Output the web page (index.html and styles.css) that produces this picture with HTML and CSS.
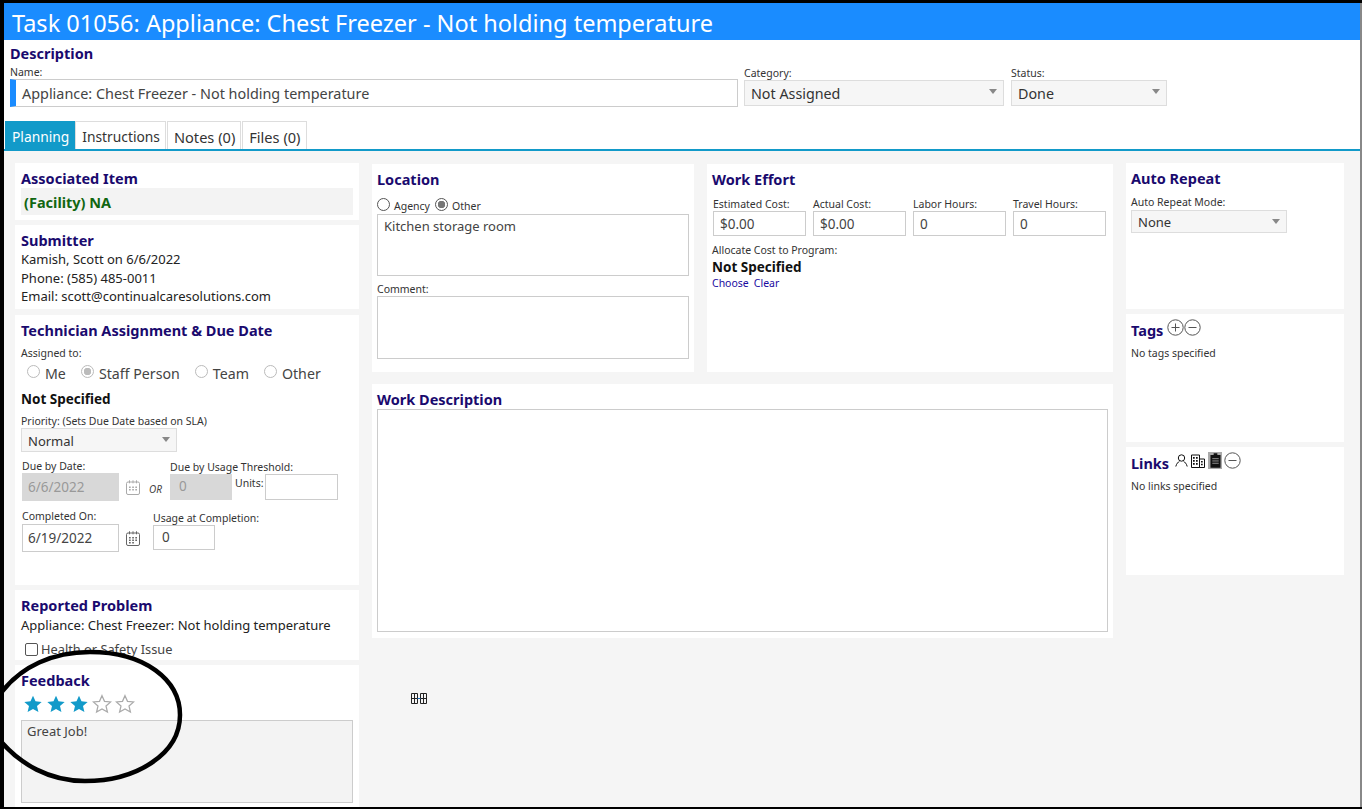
FILE: index.html
```html
<!DOCTYPE html>
<html lang="en">
<head>
    <meta charset="UTF-8">
    <title>Task 01056</title>
    <link rel="stylesheet" href="styles.css">
</head>
<body>
    <div class="frame">
        <h1 class="title">Task 01056: Appliance: Chest Freezer - Not holding temperature</h1>

        <div class="description">
            <h2>Description</h2>
            <div class="desc-row">
                <div class="field name-field">
                    <label>Name:</label>
                    <div class="input required">Appliance: Chest Freezer - Not holding temperature</div>
                </div>
                <div class="field category-field">
                    <label>Category:</label>
                    <div class="select">Not Assigned</div>
                </div>
                <div class="field status-field">
                    <label>Status:</label>
                    <div class="select">Done</div>
                </div>
            </div>
        </div>

        <div class="tabs">
            <span class="tab active">Planning</span>
            <span class="tab">Instructions</span>
            <span class="tab tab-count">Notes (0)</span>
            <span class="tab tab-count">Files (0)</span>
        </div>

        <div class="content">
            <div class="col col-left">
                <section class="card associated">
                    <h2>Associated Item</h2>
                    <div class="facility">(Facility) NA</div>
                </section>
                <section class="card submitter">
                    <h2>Submitter</h2>
                    <p>Kamish, Scott on 6/6/2022</p>
                    <p>Phone: (585) 485-0011</p>
                    <p>Email: scott@continualcaresolutions.com</p>
                </section>
                <section class="card technician">
                    <h2>Technician Assignment &amp; Due Date</h2>
                    <label>Assigned to:</label>
                    <div class="assign-row">
                        <span class="opt"><i class="radio faded"></i>Me</span>
                        <span class="opt"><i class="radio faded on"></i>Staff Person</span>
                        <span class="opt"><i class="radio faded"></i>Team</span>
                        <span class="opt"><i class="radio faded"></i>Other</span>
                    </div>
                    <div class="strong">Not Specified</div>
                    <label class="priority-label">Priority: (Sets Due Date based on SLA)</label>
                    <div class="select priority">Normal</div>
                    <div class="due-row">
                        <div class="field">
                            <label>Due by Date:</label>
                            <div class="input disabled date-input">6/6/2022</div>
                        </div>
                        <svg class="cal faded-cal" viewBox="0 0 16 16"><path d="M3 2.500h10a1.500 1.500 0 0 1 1.500 1.500v9.500a1.500 1.500 0 0 1-1.500 1.500H3a1.500 1.500 0 0 1-1.500-1.500V4A1.500 1.500 0 0 1 3 2.500zM4.500.8v3M8 .8v3M11.500.8v3" fill="none" stroke="currentColor"/><path d="M4 7h1.700v1.500H4zM7.200 7h1.700v1.500H7.200zM10.300 7H12v1.500h-1.700zM4 9.500h1.700V11H4zM7.200 9.500h1.700V11H7.200zM10.300 9.500H12V11h-1.700z" fill="currentColor"/></svg>
                        <em class="or">OR</em>
                        <div class="field threshold">
                            <label>Due by Usage Threshold:</label>
                            <div class="threshold-row">
                                <div class="input disabled threshold-input">0</div>
                                <span class="units">Units:</span>
                                <div class="input units-input"></div>
                            </div>
                        </div>
                    </div>
                    <div class="done-row">
                        <div class="field">
                            <label>Completed On:</label>
                            <div class="input date-input">6/19/2022</div>
                        </div>
                        <svg class="cal" viewBox="0 0 16 16"><path d="M3 2.500h10a1.500 1.500 0 0 1 1.500 1.500v9.500a1.500 1.500 0 0 1-1.500 1.500H3a1.500 1.500 0 0 1-1.500-1.500V4A1.500 1.500 0 0 1 3 2.500zM4.500.8v3M8 .8v3M11.500.8v3" fill="none" stroke="currentColor"/><path d="M4 6.500h1.700V8H4zM7.200 6.500h1.700V8H7.200zM10.300 6.500H12V8h-1.700zM4 9h1.700v1.500H4zM7.200 9h1.700v1.500H7.200zM10.300 9H12v1.500h-1.700zM4 11.500h1.700V13H4zM7.200 11.500h1.700V13H7.200z" fill="currentColor"/></svg>
                        <div class="field usage">
                            <label>Usage at Completion:</label>
                            <div class="input usage-input">0</div>
                        </div>
                    </div>
                </section>
                <section class="card reported">
                    <h2>Reported Problem</h2>
                    <p>Appliance: Chest Freezer: Not holding temperature</p>
                    <div class="check-row"><i class="checkbox"></i>Health or Safety Issue</div>
                </section>
                <section class="card feedback">
                    <h2>Feedback</h2>
                    <div class="stars">
                        <svg viewBox="0 0 24 24"><path class="star-on" d="M12 2l3 6.800 7.400.7-5.600 4.900 1.700 7.300L12 17.900l-6.500 3.800 1.700-7.300-5.600-4.900 7.400-.7z"/></svg>
                        <svg viewBox="0 0 24 24"><path class="star-on" d="M12 2l3 6.800 7.400.7-5.600 4.900 1.700 7.300L12 17.900l-6.500 3.800 1.700-7.300-5.600-4.900 7.400-.7z"/></svg>
                        <svg viewBox="0 0 24 24"><path class="star-on" d="M12 2l3 6.800 7.400.7-5.600 4.900 1.700 7.300L12 17.900l-6.500 3.800 1.700-7.300-5.600-4.900 7.400-.7z"/></svg>
                        <svg viewBox="0 0 24 24"><path class="star-off" d="M12 2l3 6.800 7.400.7-5.600 4.900 1.700 7.300L12 17.900l-6.500 3.800 1.700-7.300-5.600-4.900 7.400-.7z"/></svg>
                        <svg viewBox="0 0 24 24"><path class="star-off" d="M12 2l3 6.800 7.400.7-5.600 4.900 1.700 7.300L12 17.900l-6.500 3.800 1.700-7.300-5.600-4.900 7.400-.7z"/></svg>
                    </div>
                    <div class="feedback-text">Great Job!</div>
                </section>
            </div>

            <div class="col col-mid">
                <div class="mid-top">
                    <section class="card location">
                        <h2>Location</h2>
                        <div class="loc-radios">
                            <i class="radio"></i><span>Agency</span>
                            <i class="radio on"></i><span>Other</span>
                        </div>
                        <div class="input area loc-area">Kitchen storage room</div>
                        <label>Comment:</label>
                        <div class="input area comment-area"></div>
                    </section>
                    <section class="card effort">
                        <h2>Work Effort</h2>
                        <div class="effort-row">
                            <div class="field"><label>Estimated Cost:</label><div class="input">$0.00</div></div>
                            <div class="field"><label>Actual Cost:</label><div class="input">$0.00</div></div>
                            <div class="field"><label>Labor Hours:</label><div class="input">0</div></div>
                            <div class="field"><label>Travel Hours:</label><div class="input">0</div></div>
                        </div>
                        <label class="allocate">Allocate Cost to Program:</label>
                        <div class="strong">Not Specified</div>
                        <div class="links"><a>Choose</a><a>Clear</a></div>
                    </section>
                </div>
                <section class="card work-desc">
                    <h2>Work Description</h2>
                    <div class="input area work-area"></div>
                </section>
                <svg class="grid-icon" viewBox="0 0 16 11"><path d="M.5.5h6v10h-6zM9.500.5h6v10h-6zM.5 5.500h6M3.500.5v10M9.500 5.500h6M12.500.5v10" fill="none" stroke="#222"/><path d="M6.500 5.500h3" stroke="#1a6fc0"/></svg>
            </div>

            <div class="col col-right">
                <section class="card auto-repeat">
                    <h2>Auto Repeat</h2>
                    <label>Auto Repeat Mode:</label>
                    <div class="select repeat">None</div>
                </section>
                <section class="card tags">
                    <div class="head-icons">
                        <h2>Tags</h2>
                        <svg class="ring" viewBox="0 0 17 17"><circle cx="8.500" cy="8.500" r="7.700"/><path d="M4.500 8.500h8M8.500 4.500v8"/></svg>
                        <svg class="ring" viewBox="0 0 17 17"><circle cx="8.500" cy="8.500" r="7.700"/><path d="M4.500 8.500h8"/></svg>
                    </div>
                    <p class="small">No tags specified</p>
                </section>
                <section class="card card-links">
                    <div class="head-icons">
                        <h2>Links</h2>
                        <svg class="person" viewBox="0 0 13 13"><circle cx="6.500" cy="4" r="3.200"/><path d="M.8 12.500c.6-2.800 2.500-4.500 3.700-5.300M12.200 12.500c-.6-2.800-2.500-4.500-3.700-5.300"/></svg>
                        <svg class="building" viewBox="0 0 14 14"><path d="M.5 1h8v12.500h-8zM8.500 5h5v8.500h-5z" fill="none" stroke="#111"/><path d="M2 3h1.700v1.700H2zM5 3h1.700v1.700H5zM2 6h1.700v1.700H2zM5 6h1.700v1.700H5zM2 9h1.700v1.700H2zM5 9h1.700v1.700H5zM10 7h1.700v1.500H10zM10 9.800h1.700v1.500H10z" fill="#111"/></svg>
                        <span class="clip-btn"><svg viewBox="0 0 12 16"><path d="M4 0h4v2h3.500v14H.5V2H4z" fill="#111"/><path d="M2.500 6h7M2.500 8.500h7M2.500 11h7" stroke="#999"/></svg></span>
                        <svg class="ring" viewBox="0 0 17 17"><circle cx="8.500" cy="8.500" r="7.700"/><path d="M4.500 8.500h8"/></svg>
                    </div>
                    <p class="small">No links specified</p>
                </section>
            </div>
        </div>

        <svg class="circle-mark" viewBox="0 645 190 140"><path d="M-2 697C20 665 55 652 90 652C145 652 180 680 180 715C180 755 135 781 85 781C50 781 20 765-2 738"/></svg>
    </div>
</body>
</html>
```

FILE: styles.css
```css
* {
    box-sizing: border-box;
}

html, body {
    margin: 0;
    padding: 0;
    height: 809px;
    overflow: hidden;
}

body {
    background: #000;
    font-family: "Noto Sans", "Open Sans", sans-serif;
    font-size: 14px;
    color: #222;
}

.frame {
    position: relative;
    margin: 3px 0 2px 4px;
    height: 804px;
    background: #fff;
    border-right: 2px solid #888;
    display: flex;
    flex-direction: column;
    overflow: hidden;
}

.title {
    margin: 0;
    height: 37px;
    line-height: 40px;
    padding-left: 8px;
    background: #1a8cff;
    color: #fff;
    font-size: 23.500px;
    font-weight: 400;
    white-space: nowrap;
}

h2 {
    margin: 0;
    font-size: 14.500px;
    line-height: 20px;
    font-weight: 700;
    color: #1a0a6e;
}

label {
    display: block;
    font-size: 10.500px;
    line-height: 14px;
    color: #333;
}

p {
    margin: 0;
    line-height: 18.500px;
    font-size: 13px;
}

.description {
    height: 81px;
    padding: 3px 6px 0;
}

.desc-row {
    display: flex;
    margin-top: 2px;
}

.name-field {
    width: 728px;
}

.category-field {
    width: 260px;
    margin-left: 6px;
    padding-top: 1px;
}

.status-field {
    width: 156px;
    margin-left: 7px;
    padding-top: 1px;
}

.input {
    height: 25px;
    line-height: 23px;
    padding: 0 8px;
    border: 1px solid #ccc;
    background: #fff;
    color: #444;
    font-size: 13.500px;
}

.required {
    height: 28px;
    line-height: 27px;
    border-left: 6px solid #1a8cff;
    padding-left: 6px;
    font-size: 14.400px;
}

.select {
    position: relative;
    height: 26px;
    line-height: 25px;
    padding: 0 6px;
    border: 1px solid #ddd;
    background: #f6f6f6;
    color: #333;
    font-size: 14.300px;
}

.select::after {
    content: "";
    position: absolute;
    right: 6px;
    top: 8px;
    border: 4px solid transparent;
    border-top: 5px solid #888;
    border-bottom: 0;
}

.tabs {
    display: flex;
    height: 30px;
    padding-left: 1px;
    border-bottom: 2px solid #129ac9;
}

.tab {
    padding: 1px 5px 0 6px;
    line-height: 28px;
    border: 1px solid #ddd;
    border-bottom: 0;
    margin-right: 1px;
    font-size: 13.800px;
    color: #333;
}

.tab-count {
    font-size: 14.600px;
}

.tab.active {
    border: 0;
    margin-right: 0;
    padding: 1px 6px 0 7px;
    background: #129ac9;
    color: #fff;
    line-height: 29px;
}

.content {
    flex: 1;
    display: flex;
    background: #f5f5f5;
    padding-top: 12px;
    padding-left: 11px;
    min-height: 0;
}

.col {
    display: flex;
    flex-direction: column;
}

.col-left {
    width: 344px;
    gap: 5px;
}

.col-mid {
    position: relative;
    width: 741px;
    margin-left: 13px;
    margin-top: 1px;
    gap: 12px;
}

.col-right {
    width: 218px;
    margin-left: 13px;
    gap: 5px;
}

.card {
    background: #fff;
    padding: 5px 6px 0;
}

.associated {
    height: 57px;
}

.facility {
    height: 27px;
    line-height: 29px;
    padding-left: 3px;
    background: #f3f3f3;
    color: #116611;
    font-weight: 700;
    font-size: 14.500px;
}

.submitter {
    height: 84px;
}

.technician {
    height: 270px;
    margin-top: 1px;
}

.technician > label:first-of-type {
    margin-top: 6px;
}

.assign-row {
    display: flex;
    align-items: center;
    gap: 15px;
    height: 22px;
    margin-top: 2px;
    padding-left: 6px;
    font-size: 14.200px;
    color: #444;
}

.opt {
    display: flex;
    align-items: center;
    gap: 5px;
}

.opt .radio {
    margin-top: -3px;
}

.radio {
    display: inline-block;
    width: 13px;
    height: 13px;
    border: 1px solid #555;
    border-radius: 50%;
    background: #fff;
    flex: none;
}

.radio.on {
    background: radial-gradient(circle, #777 0 3.500px, #fff 4px);
}

.radio.faded {
    border-color: #bbb;
}

.radio.faded.on {
    background: radial-gradient(circle, #bbb 0 3.500px, #fff 4px);
}

.strong {
    margin-top: 5px;
    line-height: 20px;
    font-size: 13.500px;
    font-weight: 700;
    color: #111;
}

.priority-label {
    margin-top: 5px;
}

.priority {
    width: 156px;
    height: 24px;
    line-height: 24px;
    font-size: 13px;
}

.due-row, .done-row {
    display: flex;
    align-items: flex-end;
    margin-top: 7px;
    padding-left: 1px;
}

.done-row {
    margin-top: 8px;
}

.done-row .date-input {
    margin-top: 1px;
}

.date-input {
    width: 97px;
    height: 28px;
    line-height: 27px;
    padding: 0 5px;
}

.disabled {
    background: #d8d8d8;
    border-color: #d8d8d8;
    color: #999;
}

.cal {
    width: 16px;
    height: 17px;
    margin: 0 0 5px 6px;
    color: #666;
}

.faded-cal {
    color: #aaa;
}

.or {
    width: 29px;
    margin-bottom: 5px;
    text-align: center;
    font-size: 10px;
    color: #444;
}

.threshold-row {
    display: flex;
    margin-bottom: 1px;
}

.threshold-input {
    width: 62px;
    height: 26px;
}

.units {
    width: 33px;
    padding-left: 3px;
    font-size: 10.500px;
    line-height: 18px;
    color: #333;
}

.units-input {
    width: 73px;
    height: 26px;
}

.usage {
    margin-left: 12px;
    margin-bottom: 2px;
}

.usage-input {
    width: 62px;
}

.reported {
    height: 70px;
}

.reported p {
    line-height: 20px;
}

.check-row {
    display: flex;
    align-items: center;
    gap: 3px;
    margin-top: 6px;
    padding-left: 4px;
    font-size: 12.800px;
    color: #444;
    line-height: 16px;
}

.checkbox {
    width: 13px;
    height: 13px;
    border: 1px solid #555;
    border-radius: 2px;
}

.feedback {
    flex: 1;
}

.stars {
    display: flex;
    gap: 3px;
    margin-top: 4px;
    padding-left: 2px;
}

.stars svg {
    width: 20px;
    height: 20px;
}

.star-on {
    fill: #129ac9;
}

.star-off {
    fill: none;
    stroke: #aaa;
    stroke-width: 1.500;
}

.feedback-text {
    height: 83px;
    margin-top: 6px;
    padding: 1px 5px;
    border: 1px solid #ccc;
    background: #f3f3f3;
    font-size: 13px;
    line-height: 18px;
    color: #444;
}

.mid-top {
    display: flex;
    gap: 13px;
}

.location {
    width: 322px;
    height: 208px;
    padding: 5px 5px 0;
}

.effort {
    width: 406px;
    height: 208px;
    padding: 5px 5px 0;
}

.loc-radios {
    display: flex;
    align-items: center;
    gap: 4px;
    height: 20px;
    margin-top: 5px;
    font-size: 10.500px;
    color: #333;
}

.loc-radios span {
    margin-right: 1px;
    margin-top: 4px;
}

.area {
    height: 62px;
    padding: 1px 6px;
    line-height: 20px;
    font-size: 13px;
}

.comment-area {
    height: 63px;
}

.location label {
    margin: 6px 0 0;
}

.effort-row {
    display: flex;
    gap: 7px;
    margin-top: 8px;
    padding-left: 1px;
}

.effort-row .field {
    width: 93px;
}

.effort-row label {
    line-height: 14px;
}

.effort-row .input {
    padding: 0 6px;
    line-height: 25px;
}

.allocate {
    margin-top: 7px;
    line-height: 14px;
}

.effort .strong {
    margin-top: 0;
}

.links {
    display: flex;
    gap: 5px;
    font-size: 10.500px;
    line-height: 12px;
    color: #1a0aa0;
}

.work-desc {
    height: 254px;
    padding: 5px 5px 0;
}

.work-area {
    height: 223px;
}

.grid-icon {
    position: absolute;
    left: 39px;
    top: 529px;
    width: 16px;
    height: 11px;
}

.auto-repeat {
    height: 146px;
    padding-left: 5px;
}

.auto-repeat label {
    margin-top: 7px;
}

.repeat {
    width: 156px;
    height: 23px;
    line-height: 22px;
    margin-top: 1px;
    font-size: 13px;
}

.tags {
    height: 128px;
    padding-left: 5px;
}

.card-links {
    height: 128px;
    padding-left: 5px;
}

.head-icons {
    display: flex;
    align-items: flex-start;
    height: 24px;
}

.head-icons h2 {
    margin-top: 1px;
    margin-right: 4px;
}

.ring {
    width: 17px;
    height: 17px;
    fill: none;
    stroke: #555;
    stroke-width: 1;
}

.person {
    width: 13px;
    height: 13px;
    margin: 2px 3px 0 2px;
    fill: none;
    stroke: #111;
}

.building {
    width: 14px;
    height: 14px;
    margin: 2px 3px 0 0;
}

.clip-btn {
    display: flex;
    justify-content: center;
    align-items: center;
    width: 14px;
    height: 17px;
    margin-right: 2px;
    background: #aaa;
}

.clip-btn svg {
    width: 11px;
    height: 15px;
}

.small {
    font-size: 10.500px;
    line-height: 14px;
    margin-top: 3px;
    color: #333;
}

.circle-mark {
    position: absolute;
    left: -4px;
    top: 642px;
    width: 190px;
    height: 140px;
    fill: none;
    stroke: #000;
    stroke-width: 4.500;
}
```
